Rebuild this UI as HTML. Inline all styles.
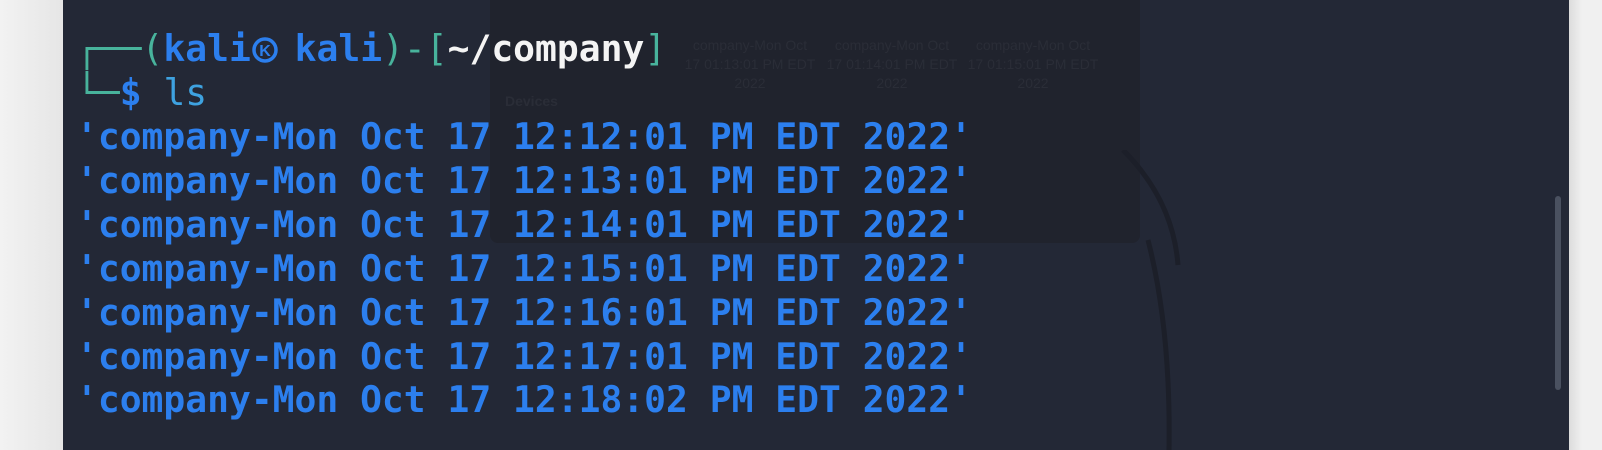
<!DOCTYPE html>
<html><head><style>
html,body{margin:0;padding:0;}
body{width:1602px;height:450px;overflow:hidden;background:#ececec;position:relative;font-family:"DejaVu Sans Mono","Liberation Mono",monospace;}
#lg{position:absolute;left:0;top:0;width:63px;height:450px;background:linear-gradient(90deg,#f2f2f2,#e6e6e6);}
#rg{position:absolute;left:1569px;top:0;width:33px;height:450px;background:linear-gradient(90deg,#dcdcdc,#f0f0f0 40%);}
#term{position:absolute;left:63px;top:0;width:1506px;height:450px;background:#232836;}
#win{position:absolute;left:427px;top:-10px;width:650px;height:253px;background:#20232d;border-radius:8px;}
.ft{position:absolute;color:#2a2d37;font-family:"Liberation Sans",sans-serif;font-size:14px;text-align:center;line-height:19px;}
#sb{position:absolute;left:1555px;top:196px;width:6px;height:194px;background:#4a5160;border-radius:3px;}
.l{position:absolute;left:76px;font-size:36.3px;font-weight:bold;color:#2c7fee;white-space:pre;line-height:44px;}
.t{color:#48b39c;font-weight:normal;}
.w{color:#f4f4f4;}
.ls{color:#3ea2e0;font-weight:normal;}
</style></head><body>
<div id="lg"></div><div id="rg"></div>
<div id="term">
<div id="win"></div>
<svg style="position:absolute;left:1040px;top:150px" width="150" height="300"><path d="M20 0 Q70 50 75 115" stroke="#1c1f29" stroke-width="5" fill="none"/><path d="M45 90 Q68 180 66 300" stroke="#1c1f29" stroke-width="5" fill="none"/></svg>
</div>
<div class="ft" style="left:680px;top:36px;width:140px">company-Mon Oct<br>17 01:13:01 PM EDT<br>2022</div>
<div class="ft" style="left:822px;top:36px;width:140px">company-Mon Oct<br>17 01:14:01 PM EDT<br>2022</div>
<div class="ft" style="left:963px;top:36px;width:140px">company-Mon Oct<br>17 01:15:01 PM EDT<br>2022</div>
<div class="ft" style="left:505px;top:92px;text-align:left;font-weight:bold">Devices</div>
<div id="sb"></div>
<div class="l" style="top:27px"><span class="t">┌──(</span>kali<svg width="43.8" height="32" style="vertical-align:-5px"><circle cx="14" cy="16" r="11" fill="none" stroke="#2c7fee" stroke-width="3.5"/><text x="14" y="22" font-size="16" font-family="Liberation Sans" font-weight="bold" fill="#2c7fee" text-anchor="middle">K</text></svg>kali<span class="t">)-[</span><span class="w">~/company</span><span class="t">]</span></div>
<div class="l" style="top:71px"><span class="t">└─</span>$ <span class="ls">ls</span></div>
<div class="l" style="top:115px">'company-Mon Oct 17 12:12:01 PM EDT 2022'</div>
<div class="l" style="top:158.9px">'company-Mon Oct 17 12:13:01 PM EDT 2022'</div>
<div class="l" style="top:202.8px">'company-Mon Oct 17 12:14:01 PM EDT 2022'</div>
<div class="l" style="top:246.7px">'company-Mon Oct 17 12:15:01 PM EDT 2022'</div>
<div class="l" style="top:290.6px">'company-Mon Oct 17 12:16:01 PM EDT 2022'</div>
<div class="l" style="top:334.5px">'company-Mon Oct 17 12:17:01 PM EDT 2022'</div>
<div class="l" style="top:378.4px">'company-Mon Oct 17 12:18:02 PM EDT 2022'</div>
</body></html>
